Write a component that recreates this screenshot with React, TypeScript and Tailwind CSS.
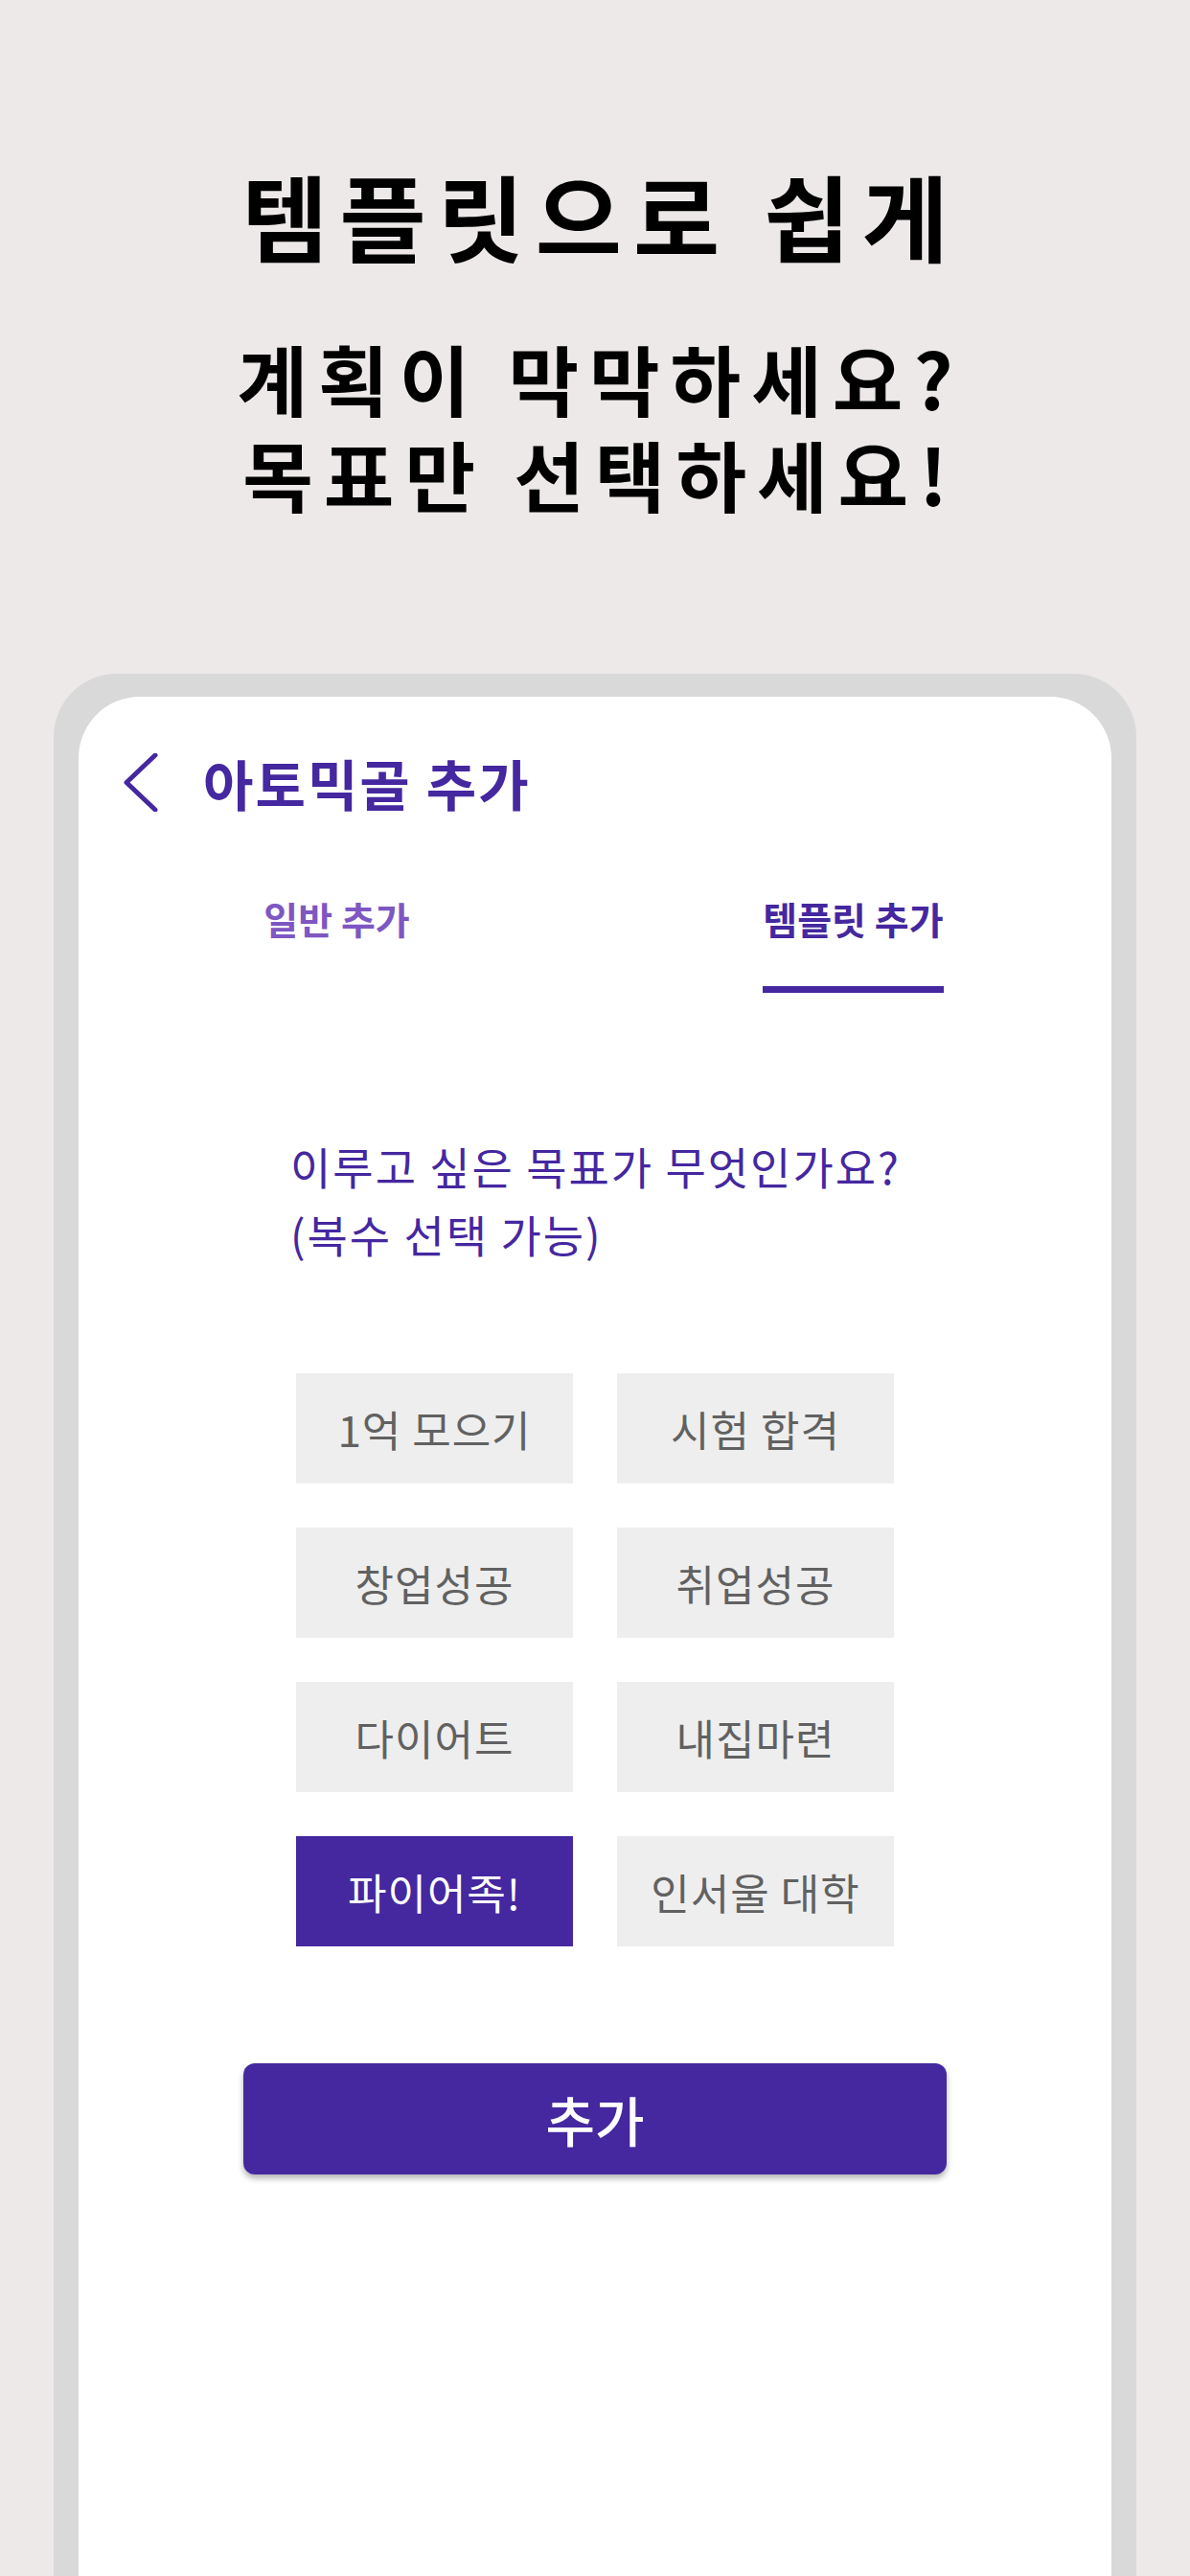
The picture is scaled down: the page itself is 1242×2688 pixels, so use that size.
import React from "react";

const FONT = { fontFamily: '"Noto Sans CJK KR", "Noto Sans", sans-serif' };

const chips = [
  { label: "1억 모으기", selected: false },
  { label: "시험 합격", selected: false },
  { label: "창업성공", selected: false },
  { label: "취업성공", selected: false },
  { label: "다이어트", selected: false },
  { label: "내집마련", selected: false },
  { label: "파이어족!", selected: true },
  { label: "인서울 대학", selected: false },
];

export default function App() {
  return (
    <div
      className="w-[1242px] h-[2688px] overflow-hidden bg-[#eee9e9] flex flex-col items-center"
      style={FONT}
    >
      <div className="pt-[161px] flex flex-col items-center text-black font-bold">
        <div className="text-[98px] leading-[124px] tracking-[12px] pl-[12px]">템플릿으로 쉽게</div>
        <div className="mt-[58px] text-[80px] leading-[100px] tracking-[11px] pl-[11px]">계획이 막막하세요?</div>
        <div className="text-[80px] leading-[100px] tracking-[11px] pl-[11px]">목표만 선택하세요!</div>
      </div>

      <div className="mt-[160px] w-[1130px] flex-1 bg-[#d9d9d9] rounded-t-[66px] pt-[24px] px-[26px] flex flex-col">
        <div className="flex-1 bg-white rounded-t-[64px] flex flex-col">
          {/* header */}
          <div className="pt-[44px] pl-[46px] h-[134px] flex items-start">
            <div className="h-[90px] flex items-center">
              <svg width="37" height="61" viewBox="0 0 37 61" fill="none">
                <path d="M34 2 L4 30.5 L34 59" stroke="#4527a0" strokeWidth="5" strokeLinecap="round" strokeLinejoin="round" />
              </svg>
              <div className="ml-[47px] text-[57px] leading-[90px] font-bold text-[#4527a0] tracking-[2px]">
                아토믹골 추가
              </div>
            </div>
          </div>

          {/* tabs */}
          <div className="mt-[72px] flex">
            <div className="w-1/2 flex justify-center">
              <div className="flex flex-col items-center">
                <div className="text-[39px] leading-[50px] font-bold text-[#7e57c2] tracking-[0px]">일반 추가</div>
              </div>
            </div>
            <div className="w-1/2 flex justify-center">
              <div className="flex flex-col items-stretch">
                <div className="text-[39px] leading-[50px] font-bold text-[#4527a0] tracking-[0px]">템플릿 추가</div>
                <div className="mt-[46px] h-[7px] bg-[#4527a0]" />
              </div>
            </div>
          </div>

          {/* question */}
          <div className="mt-[145px] pl-[221px] text-[46px] leading-[71px] text-[#4527a0] tracking-[2px]">
            <div>이루고 싶은 목표가 무엇인가요?</div>
            <div>(복수 선택 가능)</div>
          </div>

          {/* chips */}
          <div className="mt-[110px] flex justify-center">
            <div className="grid grid-cols-[289px_289px] gap-x-[46px] gap-y-[46px]">
              {chips.map((c) => (
                <div
                  key={c.label}
                  className={
                    c.selected
                      ? "h-[115px] flex items-center justify-center bg-[#4527a0] text-white text-[44px] tracking-[1px]"
                      : "h-[115px] flex items-center justify-center bg-[#eeeeee] text-[#616161] text-[44px] tracking-[1px]"
                  }
                >
                  {c.label}
                </div>
              ))}
            </div>
          </div>

          {/* button */}
          <div className="mt-[122px] flex justify-center">
            <div className="w-[734px] h-[116px] rounded-[12px] bg-[#4527a0] shadow-[0_4px_6px_rgba(0,0,0,0.3)] flex items-center justify-center text-white text-[56px] font-medium">
              추가
            </div>
          </div>
        </div>
      </div>
    </div>
  );
}
